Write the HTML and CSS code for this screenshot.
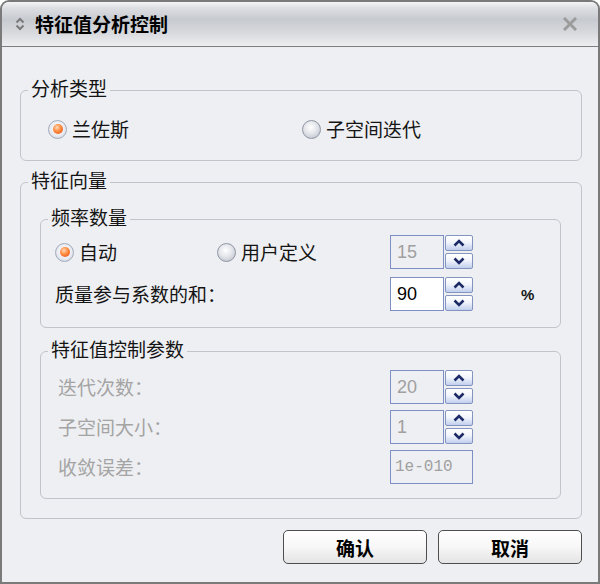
FILE: index.html
```html
<!DOCTYPE html>
<html lang="zh-CN">
<head>
<meta charset="utf-8">
<title>特征值分析控制</title>
<link rel="stylesheet" href="styles.css">
</head>
<body>
<div class="window">
  <div class="titlebar">
    <svg class="title-icon" width="10" height="14" viewBox="0 0 10 14">
      <path d="M1.5 5.5 L5 2 L8.5 5.5" fill="none" stroke="#7a7a7a" stroke-width="2"/>
      <path d="M1.5 8.5 L5 12 L8.5 8.5" fill="none" stroke="#7a7a7a" stroke-width="2"/>
    </svg>
    <span class="title">特征值分析控制</span>
    <svg class="close" width="14" height="14" viewBox="0 0 14 14">
      <path d="M2 2 L12 12 M12 2 L2 12" stroke="#9c9c9c" stroke-width="3" stroke-linecap="square"/>
    </svg>
  </div>
  <div class="content">
    <div class="group g-type">
      <span class="legend">分析类型</span>
      <div class="row">
        <div class="radio-item w-lanczos"><span class="radio checked"></span><span>兰佐斯</span></div>
        <div class="radio-item"><span class="radio"></span><span>子空间迭代</span></div>
      </div>
    </div>

    <div class="group g-vec">
      <span class="legend">特征向量</span>

      <div class="group g-freq">
        <span class="legend">频率数量</span>
        <div class="line">
          <div class="radio-item w-auto"><span class="radio checked"></span><span>自动</span></div>
          <div class="radio-item w-user"><span class="radio"></span><span>用户定义</span></div>
          <div class="spin">
            <div class="spin-input">15</div>
            <div class="spin-btns">
              <div class="spin-btn"><svg width="12" height="8" viewBox="0 0 12 8"><path d="M1.5 6.5 L6 2 L10.5 6.5" fill="none" stroke="#1c2b68" stroke-width="2.6"/></svg></div>
              <div class="spin-btn"><svg width="12" height="8" viewBox="0 0 12 8"><path d="M1.5 1.5 L6 6 L10.5 1.5" fill="none" stroke="#1c2b68" stroke-width="2.6"/></svg></div>
            </div>
          </div>
        </div>
        <div class="line">
          <span class="label">质量参与系数的和：</span>
          <div class="spin">
            <div class="spin-input enabled">90</div>
            <div class="spin-btns">
              <div class="spin-btn"><svg width="12" height="8" viewBox="0 0 12 8"><path d="M1.5 6.5 L6 2 L10.5 6.5" fill="none" stroke="#1c2b68" stroke-width="2.6"/></svg></div>
              <div class="spin-btn"><svg width="12" height="8" viewBox="0 0 12 8"><path d="M1.5 1.5 L6 6 L10.5 1.5" fill="none" stroke="#1c2b68" stroke-width="2.6"/></svg></div>
            </div>
          </div>
          <span class="unit">%</span>
        </div>
      </div>

      <div class="group g-param">
        <span class="legend">特征值控制参数</span>
        <div class="line">
          <span class="label disabled">迭代次数：</span>
          <div class="spin">
            <div class="spin-input">20</div>
            <div class="spin-btns">
              <div class="spin-btn"><svg width="12" height="8" viewBox="0 0 12 8"><path d="M1.5 6.5 L6 2 L10.5 6.5" fill="none" stroke="#1c2b68" stroke-width="2.6"/></svg></div>
              <div class="spin-btn"><svg width="12" height="8" viewBox="0 0 12 8"><path d="M1.5 1.5 L6 6 L10.5 1.5" fill="none" stroke="#1c2b68" stroke-width="2.6"/></svg></div>
            </div>
          </div>
        </div>
        <div class="line">
          <span class="label disabled">子空间大小：</span>
          <div class="spin">
            <div class="spin-input">1</div>
            <div class="spin-btns">
              <div class="spin-btn"><svg width="12" height="8" viewBox="0 0 12 8"><path d="M1.5 6.5 L6 2 L10.5 6.5" fill="none" stroke="#1c2b68" stroke-width="2.6"/></svg></div>
              <div class="spin-btn"><svg width="12" height="8" viewBox="0 0 12 8"><path d="M1.5 1.5 L6 6 L10.5 1.5" fill="none" stroke="#1c2b68" stroke-width="2.6"/></svg></div>
            </div>
          </div>
        </div>
        <div class="line">
          <span class="label disabled">收敛误差：</span>
          <div class="wide-input">1e-010</div>
        </div>
      </div>
    </div>

    <div class="buttons">
      <button class="btn">确认</button>
      <button class="btn">取消</button>
    </div>
  </div>
</div>
</body>
</html>
```

FILE: styles.css
```css
* { box-sizing: border-box; }
html, body { margin: 0; padding: 0; }
body {
  width: 600px;
  height: 584px;
  font-family: "Noto Sans CJK SC", "Noto Sans", sans-serif;
  font-size: 19px;
  color: #141414;
  background: #ffffff;
}
.window {
  width: 600px;
  height: 584px;
  border: 2px solid #7a7a7a;
  border-radius: 9px 9px 0 0;
  background: #eeeff2;
  overflow: hidden;
  display: flex;
  flex-direction: column;
}
.titlebar {
  flex: none;
  height: 45px;
  display: flex;
  align-items: center;
  padding: 0 21px 0 13px;
  border-bottom: 1px solid #7e7e7e;
  background: linear-gradient(to bottom, #f3f4f6 0%, #dcdee2 14%, #c7cad0 40%, #d6d8dc 68%, #eceef0 100%);
}
.title-icon { flex: none; }
.title {
  margin-left: 10px;
  font-weight: 700;
  font-size: 19px;
  color: #000;
  line-height: 22px;
}
.close { margin-left: auto; flex: none; }

.content {
  flex: 1;
  padding: 43px 16px 0 18px;
}
.group {
  position: relative;
  border: 1px solid #c2c4cc;
  border-radius: 6px;
}
.legend {
  position: absolute;
  top: -14px;
  left: 7px;
  padding: 0 3px;
  line-height: 22px;
  background: #eeeff2;
  white-space: nowrap;
}
.g-type { padding: 27px 0 20px 27px; }
.row { display: flex; align-items: center; height: 22px; }
.radio-item {
  display: flex;
  align-items: center;
  gap: 5px;
  white-space: nowrap;
  line-height: 22px;
}
.w-lanczos { width: 254px; }
.w-auto { width: 162px; }
.w-user { width: 173px; }

.radio {
  flex: none;
  width: 19px;
  height: 19px;
  border-radius: 50%;
  border: 1px solid #8e95a3;
  background: radial-gradient(circle at 45% 38%, #ffffff 0%, #e3e5ea 45%, #b4b9c4 100%);
  display: flex;
  align-items: center;
  justify-content: center;
}
.radio.checked {
  border-color: #a3abbb;
  background: radial-gradient(circle at 50% 45%, #ffffff 0%, #e9ecf2 55%, #c3c9d6 100%);
}
.radio.checked::after {
  content: "";
  width: 10px;
  height: 10px;
  border-radius: 50%;
  background: radial-gradient(circle at 40% 35%, #ffd9b8 0%, #ff8a3d 45%, #e0481a 100%);
}

.g-vec {
  margin-top: 21px;
  padding: 36px 20px 19px 19px;
}
.g-freq {
  padding: 15px 0 16px 14px;
  display: flex;
  flex-direction: column;
  gap: 8px;
}
.g-param {
  margin-top: 23px;
  padding: 18px 0 14px 14px;
  display: flex;
  flex-direction: column;
  gap: 6px;
}
.line {
  display: flex;
  align-items: center;
  height: 34px;
}
.label {
  width: 335px;
  white-space: nowrap;
  line-height: 22px;
}
.label.disabled {
  color: #a4a4a4;
  padding-left: 3px;
}
.unit {
  margin-left: 48px;
  font-family: "Liberation Sans", sans-serif;
  font-size: 15px;
  font-weight: 700;
}

.spin {
  display: flex;
  gap: 1px;
  height: 34px;
}
.spin-input, .wide-input {
  height: 34px;
  border: 1px solid #7d8fc4;
  background: #eeeff2;
  color: #a0a0a0;
  display: flex;
  align-items: center;
  padding-left: 6px;
}
.spin-input {
  width: 54px;
  font-family: "Liberation Sans", sans-serif;
  font-size: 18px;
}
.spin-input.enabled {
  background: #ffffff;
  color: #000;
}
.wide-input {
  width: 83px;
  font-family: "Liberation Mono", monospace;
  font-size: 16px;
  padding-left: 4px;
}
.spin-btns {
  width: 28px;
  display: flex;
  flex-direction: column;
  justify-content: space-between;
}
.spin-btn {
  height: 16px;
  border: 1px solid #8494c0;
  border-radius: 2px;
  background: linear-gradient(to bottom, #ffffff 0%, #f2f5fb 45%, #c2cfee 100%);
  display: flex;
  align-items: center;
  justify-content: center;
}

.buttons {
  margin-top: 11px;
  display: flex;
  justify-content: flex-end;
  gap: 11px;
}
.btn {
  width: 144px;
  height: 34px;
  border: 1px solid #4e4e4e;
  border-radius: 5px;
  background: linear-gradient(to bottom, #ffffff 0%, #f7f7f7 50%, #e4e4e6 100%);
  font-family: "Noto Sans CJK SC", sans-serif;
  font-size: 19px;
  font-weight: 700;
  color: #000;
  padding: 0;
}
```
